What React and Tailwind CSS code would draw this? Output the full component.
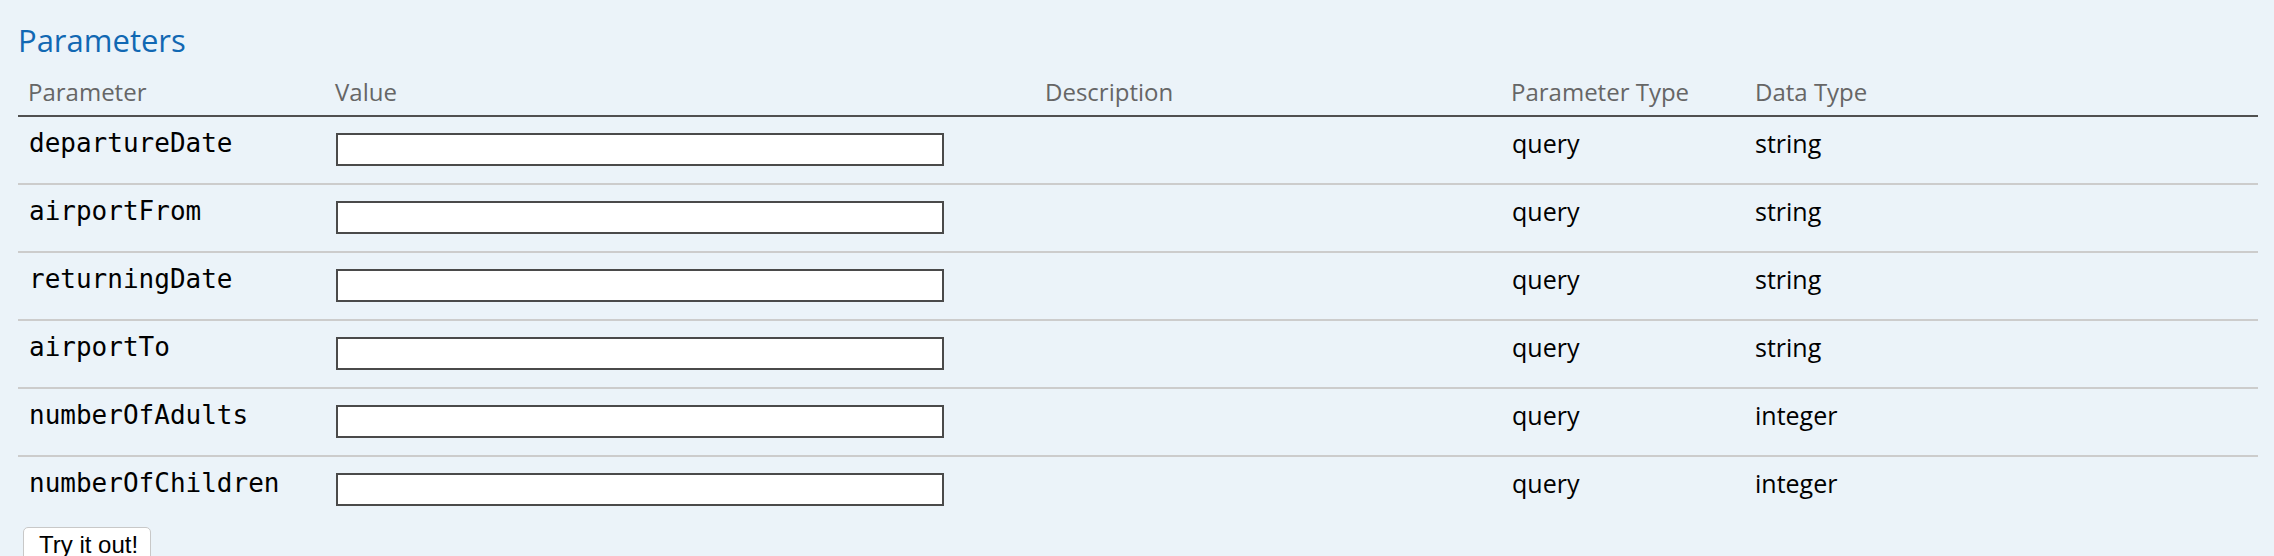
const params = [
  { name: "departureDate", paramType: "query", dataType: "string" },
  { name: "airportFrom", paramType: "query", dataType: "string" },
  { name: "returningDate", paramType: "query", dataType: "string" },
  { name: "airportTo", paramType: "query", dataType: "string" },
  { name: "numberOfAdults", paramType: "query", dataType: "integer" },
  { name: "numberOfChildren", paramType: "query", dataType: "integer" },
];

export default function App() {
  return (
    <div className="h-screen overflow-hidden bg-[#ebf3f9] pl-[18px] pr-[16px] pt-[19px] font-['Open_Sans',sans-serif]">
      <h4 className="text-[31px] leading-[42px] text-[#1168b3]">Parameters</h4>

      <div className="mt-[14px] grid h-[42px] grid-cols-[308px_709px_466px_244px_1fr] border-b-2 border-[#505050] text-[24px] leading-[33px] text-[#666]">
        <div className="pl-[10px]">Parameter</div>
        <div className="pl-[9px]">Value</div>
        <div className="pl-[10px]">Description</div>
        <div className="pl-[10px]">Parameter Type</div>
        <div className="pl-[10px]">Data Type</div>
      </div>

      {params.map((p, i) => (
        <div
          key={p.name}
          className={
            i < params.length - 1
              ? "grid h-[68px] grid-cols-[308px_709px_466px_244px_1fr] border-b-2 border-[#cccccc]"
              : "grid h-[66px] grid-cols-[308px_709px_466px_244px_1fr]"
          }
        >
          <div className="pl-[11px] pt-[11px] font-['DejaVu_Sans_Mono',monospace] text-[26px] leading-[30px] text-black">
            {p.name}
          </div>
          <div className="pl-[10px] pt-[16px]">
            <input
              type="text"
              className="block h-[33px] w-[608px] border-2 border-[#4a4a4a] bg-white"
            />
          </div>
          <div />
          <div className="pl-[11px] pt-[10px] text-[25px] leading-[33px] text-black">{p.paramType}</div>
          <div className="pl-[10px] pt-[10px] text-[25px] leading-[33px] text-black">{p.dataType}</div>
        </div>
      ))}

      <button className="ml-[5px] mt-[4px] w-[128px] rounded-[5px] border border-[#c8c8c8] bg-white pb-[4px] pl-[15px] pt-[3px] text-left font-['Liberation_Sans',sans-serif] text-[24px] leading-[28px] text-black">
        Try it out!
      </button>
    </div>
  );
}
